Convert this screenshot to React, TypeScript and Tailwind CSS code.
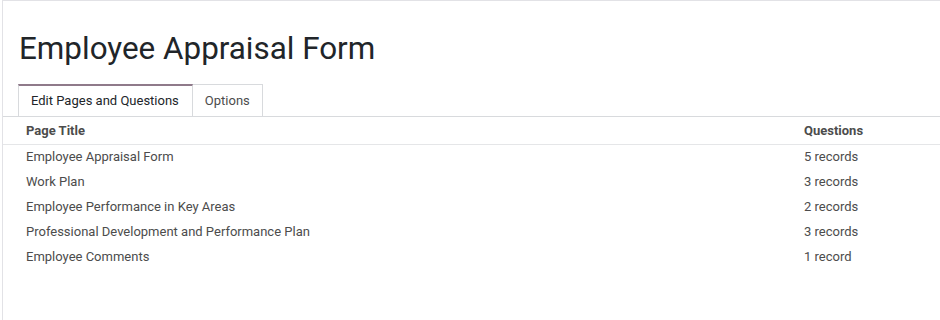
const pages = [
  { title: "Employee Appraisal Form", questions: "5 records" },
  { title: "Work Plan", questions: "3 records" },
  { title: "Employee Performance in Key Areas", questions: "2 records" },
  { title: "Professional Development and Performance Plan", questions: "3 records" },
  { title: "Employee Comments", questions: "1 record" },
];

export default function App() {
  return (
    <div className="h-[320px] w-[940px] bg-white font-['Roboto',sans-serif]">
      <div className="ml-[2px] h-full border-l border-t border-[#e2e2e6] bg-white">
        <h1 className="pl-4 pt-[28px] text-[31.4px] font-normal leading-[40px] text-[#212529]">
          Employee Appraisal Form
        </h1>
        <div className="mt-[15px] flex border-b border-[#d8dadd] pl-[15px]">
          <div className="-mb-px flex h-[32px] items-center border-x border-t-2 border-[#d8dadd] border-t-[#8f7a8a] bg-white pl-[12px] pr-[13px] text-[13px] text-[#212529]">
            Edit Pages and Questions
          </div>
          <div className="flex h-[32px] items-center border-r border-t border-[#d8dadd] px-[12px] text-[13px] text-[#4c4c4c]">
            Options
          </div>
        </div>
        <table className="w-full border-collapse text-[13px] text-[#4c4c4c]">
          <thead>
            <tr className="h-[27px] border-b border-[#e5e6e8]">
              <th className="pl-[23px] text-left font-bold text-[#4c4c4c]">Page Title</th>
              <th className="w-[136px] text-left font-bold text-[#4c4c4c]">Questions</th>
            </tr>
          </thead>
          <tbody>
            {pages.map((p) => (
              <tr key={p.title} className="h-[25px]">
                <td className="pl-[23px]">{p.title}</td>
                <td>{p.questions}</td>
              </tr>
            ))}
          </tbody>
        </table>
      </div>
    </div>
  );
}
